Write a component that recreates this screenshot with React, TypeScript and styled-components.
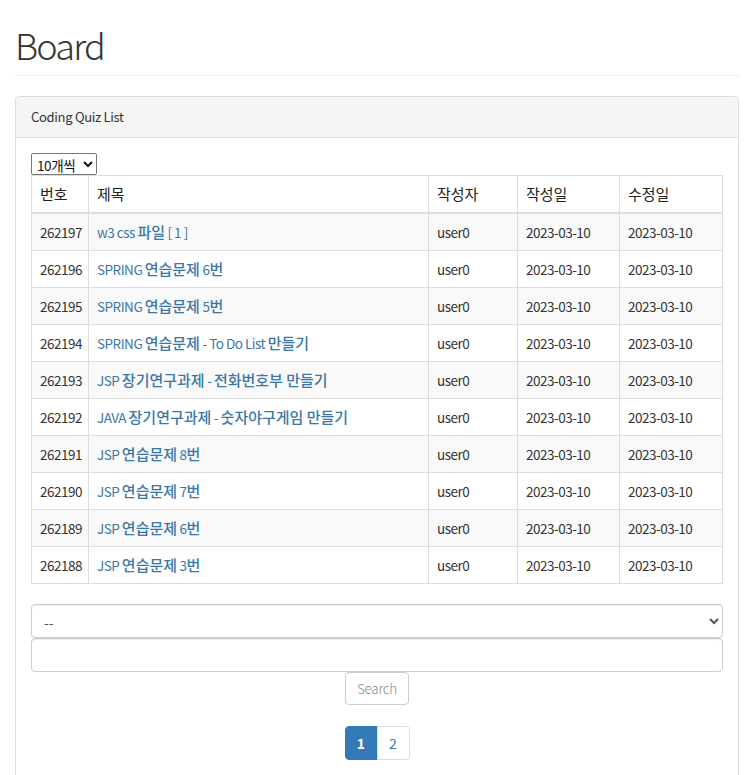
import React from "react";
import styled, { createGlobalStyle } from "styled-components";

const Global = createGlobalStyle`
  html, body { margin: 0; padding: 0; background: #fff; }
  body {
    font-family: "Noto Sans CJK KR", "Open Sans", sans-serif;
    font-size: 14px;
    line-height: 1.42857;
    color: #333;
  }
  * { box-sizing: border-box; }
`;

const Container = styled.div`
  padding: 0 6px 0 15px;
`;

const Header = styled.div`
  padding-top: 22px;
  padding-bottom: 9px;
  border-bottom: 1px solid #eee;
  margin-bottom: 20px;
`;

const Title = styled.h1`
  margin: 0;
  font-size: 36px;
  font-weight: 300;
  line-height: 44px;
  letter-spacing: -1.8px;
  color: #333;
  font-family: "Noto Sans CJK KR", "Open Sans", sans-serif;
`;

const Panel = styled.div`
  border: 1px solid #ddd;
  border-radius: 4px;
  background: #fff;
  min-height: 800px;
`;

const PanelHeading = styled.div`
  background: #f5f5f5;
  border-bottom: 1px solid #ddd;
  border-radius: 3px 3px 0 0;
  padding: 0 15px;
  height: 41px;
  line-height: 40px;
  font-size: 13px;
  letter-spacing: -0.3px;
  color: #333;
`;

const PanelBody = styled.div`
  padding: 15px;
  display: flex;
  flex-direction: column;
`;

const SizeSelect = styled.select`
  align-self: flex-start;
  font-family: "Noto Sans CJK KR", sans-serif;
  font-size: 13.5px;
  letter-spacing: -0.4px;
  height: 22px;
  width: 66px;
  padding: 0 1px;
  border: 1px solid #767676;
  border-radius: 2px;
  color: #111;
  background: #fff;
`;

const Table = styled.table`
  width: 100%;
  table-layout: fixed;
  border-collapse: collapse;
  border: 1px solid #ddd;
  margin-bottom: 20px;
`;

const Th = styled.th<{ $w?: number }>`
  text-align: left;
  font-weight: 400;
  font-size: 15px;
  line-height: 20px;
  padding: 7px 8px;
  height: 37px;
  border: 1px solid #ddd;
  border-bottom: 2px solid #ddd;
  color: #222;
  width: ${(p) => (p.$w ? `${p.$w}px` : "auto")};
`;

const Row = styled.tr<{ $striped: boolean }>`
  background: ${(p) => (p.$striped ? "#f9f9f9" : "#fff")};
`;

const Td = styled.td`
  padding: 8px;
  height: 37px;
  line-height: 20px;
  border: 1px solid #ddd;
  font-size: 13.5px;
  letter-spacing: -0.5px;
  color: #333;
  white-space: nowrap;
  overflow: hidden;
`;

const TitleLink = styled.a`
  color: #3a77a8;
  text-decoration: none;
`;

const Ko = styled.span`
  font-size: 15px;
  line-height: 1;
  letter-spacing: 0;
  font-weight: 500;
`;

const FormSelect = styled.select`
  height: 34px;
  width: 100%;
  border: 1px solid #ccc;
  border-radius: 4px;
  padding: 6px 8px;
  font-family: "Noto Sans CJK KR", sans-serif;
  font-size: 14px;
  color: #555;
  background: #fff;
  box-shadow: inset 0 1px 1px rgba(0, 0, 0, 0.075);
`;

const FormInput = styled.input`
  height: 34px;
  width: 100%;
  border: 1px solid #ccc;
  border-radius: 4px;
  padding: 6px 12px;
  font-size: 14px;
  box-shadow: inset 0 1px 1px rgba(0, 0, 0, 0.075);
`;

const Center = styled.div`
  display: flex;
  justify-content: center;
`;

const SearchButton = styled.button`
  height: 33px;
  width: 64px;
  padding: 0;
  border: 1px solid #ccc;
  border-radius: 4px;
  background: #fff;
  color: #888;
  font-family: "Noto Sans CJK KR", sans-serif;
  font-size: 13.5px;
  letter-spacing: -0.3px;
  font-weight: 300;
`;

const Pagination = styled.ul`
  display: flex;
  list-style: none;
  margin: 21px 0 20px;
  padding: 0;
`;

const PageLink = styled.a<{ $active?: boolean; $first?: boolean; $last?: boolean }>`
  display: block;
  width: 33px;
  height: 34px;
  line-height: 32px;
  text-align: center;
  font-size: 14px;
  text-decoration: none;
  border: 1px solid ${(p) => (p.$active ? "#337ab7" : "#ddd")};
  background: ${(p) => (p.$active ? "#337ab7" : "#fff")};
  color: ${(p) => (p.$active ? "#fff" : "#337ab7")};
  font-weight: ${(p) => (p.$active ? 700 : 400)};
  border-radius: ${(p) => (p.$first ? "4px 0 0 4px" : p.$last ? "0 4px 4px 0" : "0")};
  margin-left: ${(p) => (p.$first ? "0" : "-1px")};
`;

type Part = string | { ko: string };
const rows: { no: number; title: Part[] }[] = [
  { no: 262197, title: ["w3 css ", { ko: "파일" }, " [ 1 ]"] },
  { no: 262196, title: ["SPRING ", { ko: "연습문제" }, " 6", { ko: "번" }] },
  { no: 262195, title: ["SPRING ", { ko: "연습문제" }, " 5", { ko: "번" }] },
  { no: 262194, title: ["SPRING ", { ko: "연습문제" }, " - To Do List ", { ko: "만들기" }] },
  { no: 262193, title: ["JSP ", { ko: "장기연구과제" }, " - ", { ko: "전화번호부 만들기" }] },
  { no: 262192, title: ["JAVA ", { ko: "장기연구과제" }, " - ", { ko: "숫자야구게임 만들기" }] },
  { no: 262191, title: ["JSP ", { ko: "연습문제" }, " 8", { ko: "번" }] },
  { no: 262190, title: ["JSP ", { ko: "연습문제" }, " 7", { ko: "번" }] },
  { no: 262189, title: ["JSP ", { ko: "연습문제" }, " 6", { ko: "번" }] },
  { no: 262188, title: ["JSP ", { ko: "연습문제" }, " 3", { ko: "번" }] },
];

export default function App() {
  return (
    <>
      <Global />
      <Container>
        <Header>
          <Title>Board</Title>
        </Header>
        <Panel>
          <PanelHeading>Coding Quiz List</PanelHeading>
          <PanelBody>
            <SizeSelect defaultValue="10">
              <option value="10">10개씩</option>
              <option value="20">20개씩</option>
            </SizeSelect>
            <Table>
              <thead>
                <tr>
                  <Th $w={57}>번호</Th>
                  <Th>제목</Th>
                  <Th $w={89}>작성자</Th>
                  <Th $w={102}>작성일</Th>
                  <Th $w={103}>수정일</Th>
                </tr>
              </thead>
              <tbody>
                {rows.map((r, i) => (
                  <Row key={r.no} $striped={i % 2 === 0}>
                    <Td>{r.no}</Td>
                    <Td>
                      <TitleLink href="#">
                        {r.title.map((p, j) =>
                          typeof p === "string" ? p : <Ko key={j}>{p.ko}</Ko>
                        )}
                      </TitleLink>
                    </Td>
                    <Td>user0</Td>
                    <Td>2023-03-10</Td>
                    <Td>2023-03-10</Td>
                  </Row>
                ))}
              </tbody>
            </Table>
            <FormSelect defaultValue="">
              <option value="">--</option>
              <option value="title">제목</option>
              <option value="writer">작성자</option>
            </FormSelect>
            <FormInput type="text" />
            <Center>
              <SearchButton type="button">Search</SearchButton>
            </Center>
            <Center>
              <Pagination>
                <li>
                  <PageLink href="#" $active $first>1</PageLink>
                </li>
                <li>
                  <PageLink href="#" $last>2</PageLink>
                </li>
              </Pagination>
            </Center>
          </PanelBody>
        </Panel>
      </Container>
    </>
  );
}
